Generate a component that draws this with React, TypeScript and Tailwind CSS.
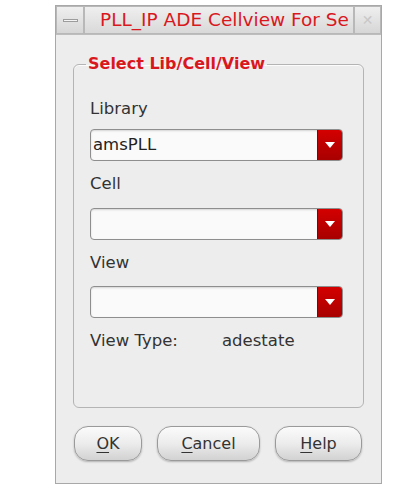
import React from "react";

const font = { fontFamily: '"DejaVu Sans", "Liberation Sans", sans-serif' };

function Combo({ value }: { value?: string }) {
  return (
    <div className="flex h-[32px] w-[253px] rounded-[4px] border border-[#8e8e8e] bg-[#fafafa] shadow-[inset_0_1px_2px_rgba(0,0,0,0.15)] overflow-hidden">
      <div className="flex flex-1 items-center pl-[2px] text-[16.5px] text-[#222]">{value}</div>
      <div className="flex w-[25px] items-center justify-center bg-gradient-to-b from-[#d40000] to-[#a80000] border-l border-[#8a0000]">
        <svg width="10" height="6" viewBox="0 0 10 6">
          <polygon points="0,0 10,0 5,6" fill="#ffffff" />
        </svg>
      </div>
    </div>
  );
}

function Btn({ u, rest, w }: { u: string; rest: string; w: string }) {
  return (
    <button
      className={`flex h-[35px] ${w} items-center justify-center rounded-[14px] border border-[#9a9a9a] bg-gradient-to-b from-[#fbfbfb] via-[#ececec] to-[#d2d2d2] text-[16px] text-[#333] shadow-[0_1px_2px_rgba(0,0,0,0.25)]`}
      style={font}
    >
      <span className="underline underline-offset-[3px]">{u}</span>
      <span>{rest}</span>
    </button>
  );
}

export default function App() {
  return (
    <div className="min-h-[490px] w-[410px] bg-white pt-[5px]" style={font}>
      <div className="ml-[55px] flex h-[479px] w-[327px] flex-col border border-[#a8a8a8] bg-[#ededed]">
        {/* Title bar */}
        <div className="flex h-[29px] items-stretch border-b border-[#bdbdbd] bg-[#e4e4e4]">
          <div className="flex w-[28px] items-center justify-center border border-[#b8b8b8] bg-gradient-to-b from-[#efefef] to-[#d6d6d6]">
            <div className="h-[3px] w-[15px] border border-[#9c9c9c] bg-[#f4f4f4]" />
          </div>
          <div className="flex flex-1 items-center overflow-hidden whitespace-nowrap border border-[#b8b8b8] bg-gradient-to-b from-[#efefef] to-[#d9d9d9] pl-[15px] text-[18.5px] text-[#d9181e]">
            PLL_IP ADE Cellview For Se
          </div>
          <div className="flex w-[27px] items-center justify-center border border-[#b8b8b8] bg-gradient-to-b from-[#efefef] to-[#d6d6d6] text-[14px] text-[#c8c8c8]">
            ✕
          </div>
        </div>

        {/* Body */}
        <div className="flex flex-1 flex-col px-[17px] pt-[19px]">
          <fieldset className="h-[354px] rounded-[6px] border border-[#b4b4b4] pl-[16px] pr-[15px] shadow-[inset_0_1px_0_rgba(255,255,255,0.8)]">
            <legend className="ml-[-4px] px-[2px] text-[16px] leading-[20px] font-bold text-[#d9181e]">Select Lib/Cell/View</legend>
            <div className="mt-[25px] text-[16.5px] leading-[20px] text-[#333]">Library</div>
            <div className="mt-[10px]">
              <Combo value="amsPLL" />
            </div>
            <div className="mt-[13px] text-[16.5px] leading-[20px] text-[#333]">Cell</div>
            <div className="mt-[14px]">
              <Combo />
            </div>
            <div className="mt-[13px] text-[16.5px] leading-[20px] text-[#333]">View</div>
            <div className="mt-[13px]">
              <Combo />
            </div>
            <div className="mt-[13px] flex text-[16.5px] leading-[20px] text-[#333]">
              <span className="w-[132px]">View Type:</span>
              <span>adestate</span>
            </div>
          </fieldset>

          <div className="mt-[18px] flex gap-[15px] pl-[1px]">
            <Btn u="O" rest="K" w="w-[68px]" />
            <Btn u="C" rest="ancel" w="w-[103px]" />
            <Btn u="H" rest="elp" w="w-[87px]" />
          </div>
        </div>
      </div>
    </div>
  );
}
